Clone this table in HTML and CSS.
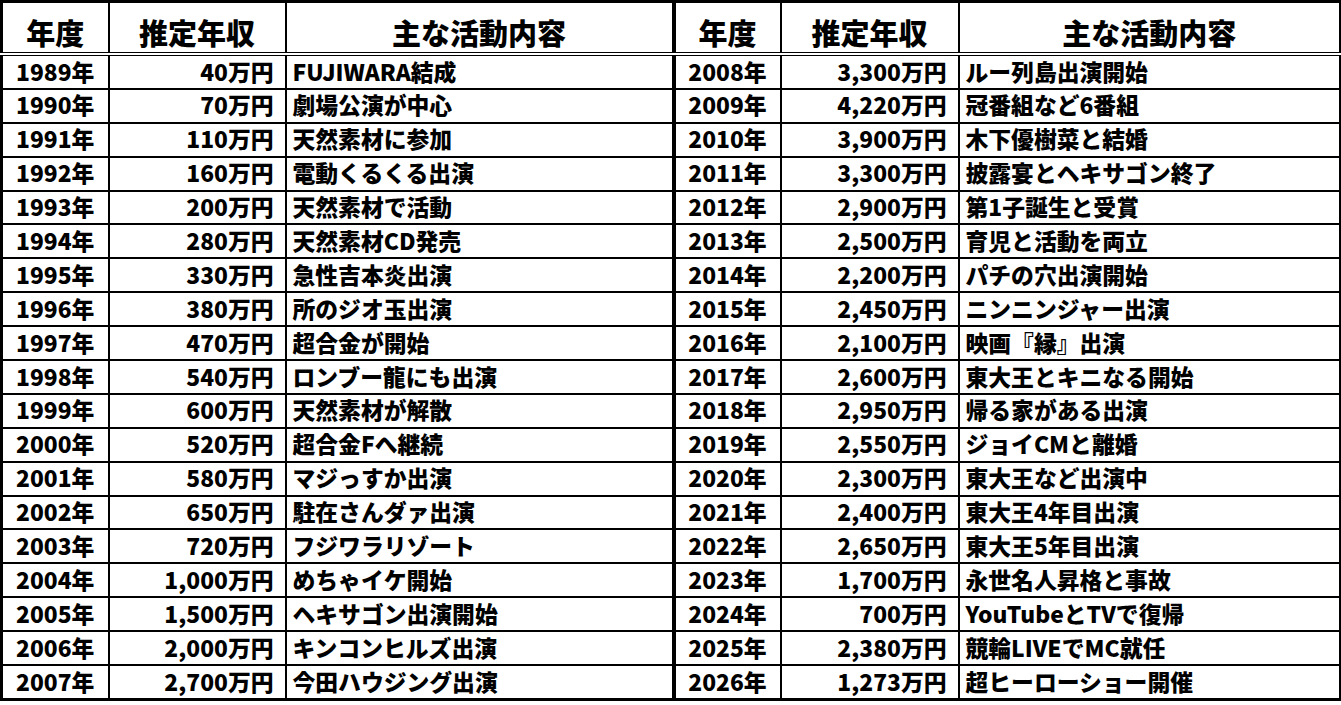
FILE: index.html
```html
<!DOCTYPE html>
<html lang="ja">
<head>
<meta charset="utf-8">
<title>年収推移</title>
<link rel="stylesheet" href="styles.css">
</head>
<body>
<table class="income">
  <colgroup>
    <col class="c-year"><col class="c-inc"><col class="c-act-l">
    <col class="c-year2"><col class="c-inc2"><col class="c-act-r">
  </colgroup>
  <thead>
    <tr>
      <th>年度</th><th>推定年収</th><th>主な活動内容</th>
      <th class="mid">年度</th><th>推定年収</th><th>主な活動内容</th>
    </tr>
  </thead>
  <tbody>
    <tr><td class="yr">1989年</td><td class="inc">40万円</td><td class="act">FUJIWARA結成</td><td class="yr mid">2008年</td><td class="inc">3,300万円</td><td class="act">ルー列島出演開始</td></tr>
    <tr><td class="yr">1990年</td><td class="inc">70万円</td><td class="act">劇場公演が中心</td><td class="yr mid">2009年</td><td class="inc">4,220万円</td><td class="act">冠番組など6番組</td></tr>
    <tr><td class="yr">1991年</td><td class="inc">110万円</td><td class="act">天然素材に参加</td><td class="yr mid">2010年</td><td class="inc">3,900万円</td><td class="act">木下優樹菜と結婚</td></tr>
    <tr><td class="yr">1992年</td><td class="inc">160万円</td><td class="act">電動くるくる出演</td><td class="yr mid">2011年</td><td class="inc">3,300万円</td><td class="act">披露宴とヘキサゴン終了</td></tr>
    <tr><td class="yr">1993年</td><td class="inc">200万円</td><td class="act">天然素材で活動</td><td class="yr mid">2012年</td><td class="inc">2,900万円</td><td class="act">第1子誕生と受賞</td></tr>
    <tr><td class="yr">1994年</td><td class="inc">280万円</td><td class="act">天然素材CD発売</td><td class="yr mid">2013年</td><td class="inc">2,500万円</td><td class="act">育児と活動を両立</td></tr>
    <tr><td class="yr">1995年</td><td class="inc">330万円</td><td class="act">急性吉本炎出演</td><td class="yr mid">2014年</td><td class="inc">2,200万円</td><td class="act">パチの穴出演開始</td></tr>
    <tr><td class="yr">1996年</td><td class="inc">380万円</td><td class="act">所のジオ玉出演</td><td class="yr mid">2015年</td><td class="inc">2,450万円</td><td class="act">ニンニンジャー出演</td></tr>
    <tr><td class="yr">1997年</td><td class="inc">470万円</td><td class="act">超合金が開始</td><td class="yr mid">2016年</td><td class="inc">2,100万円</td><td class="act">映画『縁』出演</td></tr>
    <tr><td class="yr">1998年</td><td class="inc">540万円</td><td class="act">ロンブー龍にも出演</td><td class="yr mid">2017年</td><td class="inc">2,600万円</td><td class="act">東大王とキニなる開始</td></tr>
    <tr><td class="yr">1999年</td><td class="inc">600万円</td><td class="act">天然素材が解散</td><td class="yr mid">2018年</td><td class="inc">2,950万円</td><td class="act">帰る家がある出演</td></tr>
    <tr><td class="yr">2000年</td><td class="inc">520万円</td><td class="act">超合金Fへ継続</td><td class="yr mid">2019年</td><td class="inc">2,550万円</td><td class="act">ジョイCMと離婚</td></tr>
    <tr><td class="yr">2001年</td><td class="inc">580万円</td><td class="act">マジっすか出演</td><td class="yr mid">2020年</td><td class="inc">2,300万円</td><td class="act">東大王など出演中</td></tr>
    <tr><td class="yr">2002年</td><td class="inc">650万円</td><td class="act">駐在さんダァ出演</td><td class="yr mid">2021年</td><td class="inc">2,400万円</td><td class="act">東大王4年目出演</td></tr>
    <tr><td class="yr">2003年</td><td class="inc">720万円</td><td class="act">フジワラリゾート</td><td class="yr mid">2022年</td><td class="inc">2,650万円</td><td class="act">東大王5年目出演</td></tr>
    <tr><td class="yr">2004年</td><td class="inc">1,000万円</td><td class="act">めちゃイケ開始</td><td class="yr mid">2023年</td><td class="inc">1,700万円</td><td class="act">永世名人昇格と事故</td></tr>
    <tr><td class="yr">2005年</td><td class="inc">1,500万円</td><td class="act">ヘキサゴン出演開始</td><td class="yr mid">2024年</td><td class="inc">700万円</td><td class="act">YouTubeとTVで復帰</td></tr>
    <tr><td class="yr">2006年</td><td class="inc">2,000万円</td><td class="act">キンコンヒルズ出演</td><td class="yr mid">2025年</td><td class="inc">2,380万円</td><td class="act">競輪LIVEでMC就任</td></tr>
    <tr><td class="yr">2007年</td><td class="inc">2,700万円</td><td class="act">今田ハウジング出演</td><td class="yr mid">2026年</td><td class="inc">1,273万円</td><td class="act">超ヒーローショー開催</td></tr>
  </tbody>
</table>
</body>
</html>
```

FILE: styles.css
```css
html, body {
  margin: 0;
  padding: 0;
  background: #fff;
}

body {
  font-family: "Noto Sans CJK JP", "Noto Sans", sans-serif;
  font-weight: 900;
  color: #000;
}

.income {
  border-collapse: collapse;
  table-layout: fixed;
  width: 1339px;
  border: 3px solid #000;
}

.c-year { width: 107px; }
.c-inc { width: 177px; }
.c-act-l { width: 388px; }
.c-year2 { width: 107px; }
.c-inc2 { width: 178px; }
.c-act-r { width: 382px; }

.income th,
.income td {
  border: 2px solid #000;
  padding: 0;
  white-space: nowrap;
  overflow: hidden;
}

.income th {
  height: 49px;
  padding-top: 0;
  font-size: 29px;
  font-weight: 900;
  text-align: center;
  vertical-align: bottom;
  line-height: 39px;
  border-top-width: 3px;
  border-bottom: 4px double #000;
}

.income td {
  height: 31.9px;
  font-size: 22.8px;
  line-height: 1;
}

.income .mid {
  border-left-width: 4px;
}

.yr {
  text-align: center;
}

.inc {
  text-align: right;
  padding-right: 11px !important;
}

.act {
  text-align: left;
  padding-left: 6px !important;
}
```
